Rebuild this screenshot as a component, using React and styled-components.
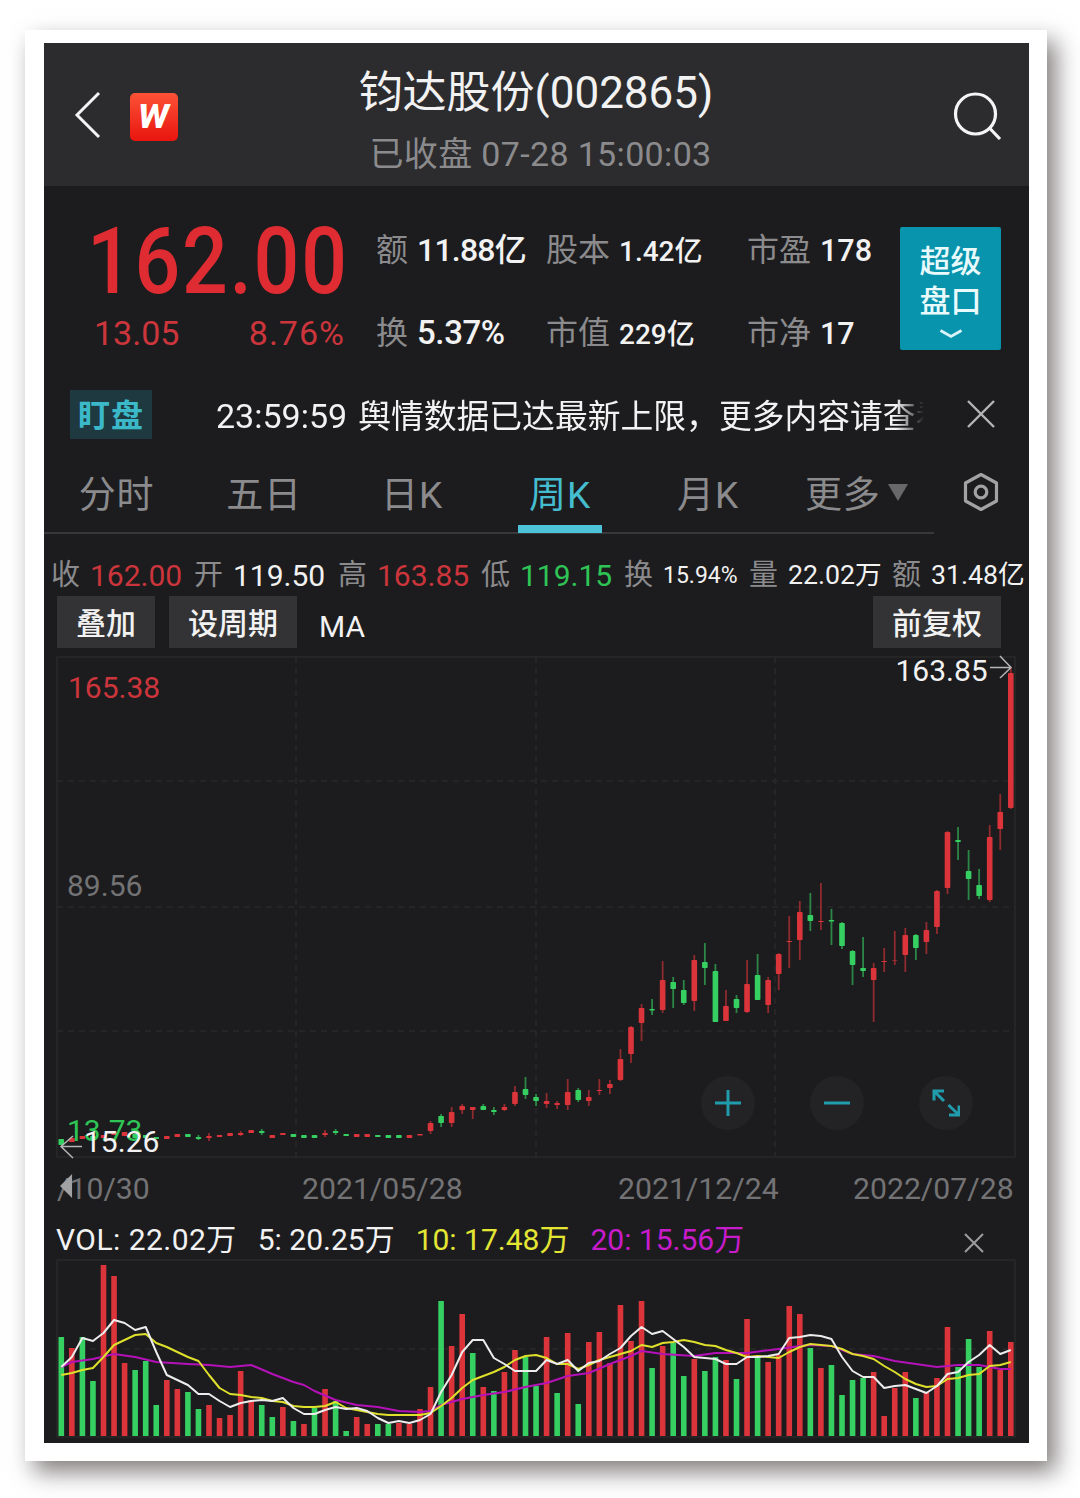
import React from "react";
import styled, { createGlobalStyle, css } from "styled-components";

const RED = "#dc343b";
const GREEN = "#36cf62";
const GREY = "#8b8b8d";

const FIRST_X = 61.3;
const STEP = 10.55;
const xAt = (i) => FIRST_X + i * STEP;

// [colour, body top, body bottom, high, low]
const candles = [
  ["g", 1139, 1145], ["r", 1138, 1142], ["r", 1136, 1139], ["g", 1136, 1139], ["r", 1135, 1138],
  ["r", 1132, 1135], ["r", 1132, 1136], ["g", 1134, 1138], ["g", 1135, 1138], ["g", 1137, 1139],
  ["r", 1136, 1139], ["r", 1134, 1137], ["g", 1134, 1137], ["g", 1137, 1139, 1135, 1140], ["r", 1136, 1138, 1133, 1141],
  ["r", 1135, 1137], ["r", 1133, 1136], ["r", 1133, 1135, 1131, 1136], ["r", 1130, 1133], ["g", 1131, 1133, 1129, 1135],
  ["r", 1135, 1138], ["r", 1133, 1135], ["g", 1134, 1137], ["g", 1135, 1138], ["g", 1135, 1138],
  ["r", 1133, 1135, 1130, 1137], ["g", 1131, 1133, 1129, 1135], ["g", 1134, 1136], ["r", 1134, 1137], ["r", 1134, 1137],
  ["g", 1135, 1137], ["g", 1135, 1138], ["g", 1135, 1138], ["r", 1135, 1138], ["r", 1134, 1135.5],
  ["r", 1123, 1131, 1121, 1134], ["g", 1116, 1123, 1114, 1127], ["r", 1112, 1123, 1107, 1127], ["r", 1106, 1110, 1104, 1114], ["r", 1107, 1110, 1107, 1119],
  ["g", 1106, 1110, 1104, 1110], ["g", 1110, 1112, 1107, 1115], ["r", 1107, 1110, 1104, 1111], ["r", 1092, 1104, 1086, 1106], ["g", 1089, 1095, 1077, 1099],
  ["g", 1097, 1101, 1094, 1106], ["r", 1101, 1104, 1093, 1108], ["r", 1103, 1105, 1101, 1109], ["r", 1092, 1105, 1079, 1110], ["g", 1090, 1100, 1088, 1102],
  ["r", 1097, 1101, 1090, 1106], ["r", 1090, 1091, 1079, 1095], ["r", 1084, 1088, 1080, 1094], ["r", 1059, 1080, 1049, 1081], ["r", 1027, 1054, 1026, 1063],
  ["r", 1008, 1023, 1004, 1041], ["g", 1009, 1010.5, 999, 1015], ["r", 980, 1010, 961, 1013], ["g", 982, 989, 977, 1008], ["g", 990, 1003, 980, 1005],
  ["r", 960, 1001, 955, 1011], ["g", 962, 968, 943, 985], ["g", 971, 1022, 964, 1022], ["r", 1006, 1021, 990, 1021], ["g", 999, 1008, 995, 1013],
  ["r", 984, 1012, 960, 1013], ["g", 975, 1000, 954, 1000], ["r", 980, 1005, 977, 1013], ["r", 954, 974, 953, 990], ["r", 941, 942, 916, 968],
  ["r", 912, 940, 901, 960], ["g", 915, 921, 893, 931], ["r", 921, 922, 883, 930], ["g", 920, 921.5, 909, 945], ["g", 923, 946, 922, 949],
  ["g", 951, 965, 950, 985], ["g", 968, 971, 937, 977], ["r", 968, 980, 963, 1022], ["r", 961, 962, 948, 972], ["r", 960, 960.5, 931, 965],
  ["r", 935, 955, 928, 972], ["g", 935, 948, 934, 960], ["r", 930, 942, 922, 954], ["r", 891, 927, 890, 934], ["r", 832, 888, 831, 894],
  ["g", 840, 842, 827, 860], ["g", 871, 879, 850, 900], ["g", 885, 896, 869, 899], ["r", 837, 900, 825, 902], ["r", 812, 829, 794, 850],
  ["r", 673, 808, 668, 809],
];

const volumes = [
  ["g", 1337], ["r", 1348], ["g", 1337], ["g", 1381], ["r", 1265], ["r", 1276], ["r", 1363], ["g", 1370], ["g", 1361], ["g", 1405],
  ["r", 1380], ["r", 1389], ["g", 1392], ["g", 1409], ["r", 1405], ["r", 1418], ["r", 1415], ["r", 1371], ["r", 1400], ["g", 1405],
  ["g", 1417], ["r", 1407], ["g", 1421], ["r", 1424], ["g", 1408], ["r", 1389], ["g", 1401], ["g", 1431], ["r", 1417], ["r", 1424],
  ["g", 1424], ["g", 1424], ["r", 1423], ["r", 1424], ["r", 1409], ["r", 1387], ["g", 1301], ["r", 1346], ["r", 1314], ["g", 1353],
  ["r", 1387], ["g", 1391], ["r", 1372], ["r", 1350], ["g", 1357], ["g", 1386], ["r", 1337], ["g", 1393], ["r", 1333], ["g", 1404],
  ["r", 1342], ["r", 1332], ["r", 1363], ["r", 1305], ["r", 1341], ["r", 1301], ["g", 1368], ["r", 1346], ["g", 1343], ["g", 1376],
  ["r", 1359], ["g", 1371], ["g", 1357], ["r", 1360], ["g", 1379], ["r", 1319], ["g", 1357], ["r", 1362], ["r", 1355], ["r", 1306],
  ["r", 1314], ["g", 1348], ["r", 1368], ["g", 1365], ["g", 1395], ["g", 1380], ["g", 1378], ["r", 1372], ["r", 1416], ["r", 1388],
  ["r", 1372], ["g", 1398], ["r", 1392], ["r", 1378], ["r", 1327], ["g", 1367], ["g", 1339], ["g", 1367], ["r", 1331], ["r", 1370],
  ["r", 1342],
];

const ma5 = [
  1367, 1357, 1338, 1341, 1333, 1320, 1323, 1330, 1327, 1352, 1375, 1380, 1385, 1394, 1394, 1401, 1407, 1403, 1401, 1400,
  1401, 1398, 1408, 1414, 1414, 1410, 1407, 1409, 1408, 1411, 1418, 1423, 1421, 1423, 1420, 1414, 1392, 1375, 1352, 1340,
  1340, 1358, 1364, 1371, 1371, 1371, 1360, 1364, 1360, 1371, 1363, 1361, 1354, 1348, 1336, 1327, 1334, 1331, 1339, 1347,
  1357, 1358, 1359, 1364, 1364, 1357, 1357, 1356, 1354, 1338, 1337, 1335, 1336, 1339, 1357, 1371, 1377, 1377, 1388, 1386,
  1385, 1389, 1393, 1386, 1374, 1372, 1362, 1355, 1345, 1354, 1350,
].map((y, i) => [i, y]);

const ma10 = [
  1375, 1373, 1370, 1368, 1357, 1345, 1340, 1335, 1334, 1343, 1347, 1352, 1357, 1361, 1375, 1388, 1394, 1395, 1397, 1398,
  1401, 1402, 1406, 1407, 1407, 1406, 1402, 1408, 1410, 1412, 1414, 1415, 1415, 1415, 1415, 1413, 1406, 1398, 1388, 1380,
  1376, 1372, 1367, 1360, 1356, 1355, 1358, 1364, 1364, 1369, 1365, 1360, 1357, 1354, 1351, 1345, 1347, 1343, 1342, 1340,
  1342, 1345, 1346, 1350, 1353, 1357, 1356, 1357, 1358, 1352, 1347, 1344, 1345, 1346, 1349, 1354, 1356, 1359, 1366, 1372,
  1379, 1384, 1387, 1386, 1379, 1378, 1375, 1374, 1366, 1365, 1362,
].map((y, i) => [i, y]);

const ma20 = [
  [0, 1367], [1, 1362], [3, 1359], [5, 1354], [7, 1357], [9, 1362], [12, 1364], [14, 1365], [16, 1367], [18, 1365],
  [20, 1374], [22, 1382], [23, 1385], [24, 1391], [26, 1400], [28, 1405], [30, 1407], [32, 1411], [34, 1412], [35, 1411],
  [36, 1405], [38, 1399], [40, 1395], [42, 1392], [44, 1387], [46, 1383], [48, 1376], [50, 1373], [52, 1364], [54, 1356],
  [55, 1351], [57, 1354], [60, 1356], [62, 1353], [65, 1353], [68, 1349], [70, 1346], [71, 1345], [73, 1346], [75, 1354],
  [77, 1356], [79, 1361], [81, 1364], [83, 1367], [85, 1365], [87, 1365], [89, 1369], [90, 1369],
];

const toPoints = (line) => line.map(([i, y]) => `${xAt(i)},${y}`).join(" ");
const colorOf = (c) => (c === "r" ? RED : GREEN);

const stats = [
  { label: "额", value: "11.88亿", size: 32, spacing: -0.8 },
  { label: "股本", value: "1.42亿", size: 28 },
  { label: "市盈", value: "178", size: 30.5 },
  { label: "换", value: "5.37%", size: 33, spacing: -0.4 },
  { label: "市值", value: "229亿", size: 28 },
  { label: "市净", value: "17", size: 30.5 },
];

const tabs = ["分时", "五日", "日K", "周K", "月K"];

const prices = [
  { label: "收", value: "162.00", color: "#cb353b" },
  { label: "开", value: "119.50" },
  { label: "高", value: "163.85", color: "#cb353b" },
  { label: "低", value: "119.15", color: "#2fc556" },
  { label: "换", value: "15.94%", size: 23 },
  { label: "量", value: "22.02万", size: 26.7 },
  { label: "额", value: "31.48亿", size: 26.7 },
];

const PriceChart = () => (
  <ChartSvg viewBox="44 652 985 510" width="985" height="510">
    <g fill="none" stroke="#28282a" strokeWidth="1.5">
      <rect x="57" y="657" width="958" height="500" />
      <g strokeDasharray="6 5">
        <path d="M296 657V1157M536 657V1157M775 657V1157" />
        <path d="M57 781H1015M57 907H1015M57 1031H1015" />
      </g>
    </g>
    {candles.map(([c, top, bottom, high, low], i) => (
      <g key={i} fill={colorOf(c)}>
        {high && <rect x={xAt(i) - 0.9} y={high} width="1.8" height={low - high} opacity="0.6" />}
        <rect x={xAt(i) - 2.8} y={top} width="5.6" height={bottom - top} rx="0.8" />
      </g>
    ))}
    <ChartText x="68" y="698" fill="#cb353b">165.38</ChartText>
    <ChartText x="67" y="896" fill="#737375">89.56</ChartText>
    <ChartText x="67" y="1141" fill="#2fc556">13.73</ChartText>
    <ChartText x="84" y="1152" fill="#f2f2f2">15.26</ChartText>
    <ChartText x="895.500" y="681" fill="#f2f2f2">163.85</ChartText>
    <g fill="none" stroke="#b5b5b5" strokeWidth="1.5">
      <path d="M990 667.500H1011M1000 656L1011 667.500L1000 678" />
      <path d="M82 1146.500H61M73 1136L61 1146.500L73 1158" />
    </g>
  </ChartSvg>
);

const VolumeChart = () => (
  <ChartSvg viewBox="44 1257 985 186" width="985" height="186">
    <rect x="57" y="1260" width="958" height="177" fill="none" stroke="#28282a" strokeWidth="1.5" />
    <path d="M57 1349H1015" stroke="#28282a" strokeWidth="1.5" strokeDasharray="6 5" />
    {volumes.map(([c, top], i) => (
      <rect key={i} x={xAt(i) - 2.8} y={top} width="5.6" height={1436 - top} fill={colorOf(c)} />
    ))}
    <g fill="none" strokeWidth="2" strokeLinejoin="round">
      <polyline points={toPoints(ma20)} stroke="#b511b8" />
      <polyline points={toPoints(ma10)} stroke="#dfe02c" />
      <polyline points={toPoints(ma5)} stroke="#ececec" />
    </g>
  </ChartSvg>
);

const App = () => (
  <Page>
    <GlobalStyle />
    <Frame>
      <Screen>
        <Header>
          <svg width="28" height="50" viewBox="0 0 28 50" fill="none" stroke="#f4f4f4" strokeWidth="3">
            <path d="M26 3L4 25L26 47" />
          </svg>
          <Logo>w</Logo>
          <TitleBlock>
            <Title>钧达股份(002865)</Title>
            <SubTitle>已收盘 07-28 15:00:03</SubTitle>
          </TitleBlock>
          <svg width="50" height="50" viewBox="0 0 50 50" fill="none" stroke="#f4f4f4" strokeWidth="3.200">
            <circle cx="23.500" cy="24" r="20" />
            <path d="M37 37.500L48 49" />
          </svg>
        </Header>

        <Quote>
          <PriceBlock>
            <BigPrice>162.00</BigPrice>
            <Changes>
              <span>13.05</span>
              <Percent>8.76%</Percent>
            </Changes>
          </PriceBlock>
          <Stats>
            {stats.map((s) => (
              <Stat key={s.label}>
                <StatLabel>{s.label}</StatLabel>
                <StatValue $size={s.size} $spacing={s.spacing}>{s.value}</StatValue>
              </Stat>
            ))}
          </Stats>
          <SuperButton>
            <span>超级</span>
            <span>盘口</span>
            <svg width="24" height="10" viewBox="0 0 24 10" fill="none" stroke="#d8f3f7" strokeWidth="2.800">
              <path d="M1.500 1.500L12 7.500L22.500 1.500" />
            </svg>
          </SuperButton>
        </Quote>

        <Notice>
          <NoticeTag>盯盘</NoticeTag>
          <NoticeText>
            <NoticeTime>23:59:59</NoticeTime>
            舆情数据已达最新上限，更多内容请查看
          </NoticeText>
          <svg width="28" height="30" viewBox="0 0 28 30" fill="none" stroke="#b4b4b6" strokeWidth="2.400">
            <path d="M1 2L27 28M27 2L1 28" />
          </svg>
        </Notice>

        <TabBar>
          <TabList>
            {tabs.map((t) => (
              <Tab key={t} $active={t === "周K"}>{t}</Tab>
            ))}
            <MoreTab>
              更多
              <svg width="20" height="17" viewBox="0 0 20 17">
                <path d="M0 0H20L10 17Z" fill="#68686a" />
              </svg>
            </MoreTab>
          </TabList>
          <svg width="36" height="40" viewBox="0 0 36 40" fill="none" stroke="#a2a2a4" strokeWidth="3.200">
            <path d="M18 2.500L33.500 11V29L18 37.500L2.500 29V11Z" strokeLinejoin="round" />
            <circle cx="18" cy="20" r="5.800" />
          </svg>
        </TabBar>

        <PriceRow>
          {prices.map((p, i) => (
            <PriceItem key={i}>
              <PriceLabel>{p.label}</PriceLabel>
              <PriceValue $color={p.color} $size={p.size}>{p.value}</PriceValue>
            </PriceItem>
          ))}
        </PriceRow>

        <Toolbar>
          <ToolButton $width={98}>叠加</ToolButton>
          <ToolButton $width={128}>设周期</ToolButton>
          <Indicator>MA</Indicator>
          <ToolButton $width={128}>前复权</ToolButton>
        </Toolbar>

        <ChartArea>
          <PriceChart />
          <ZoomControls>
            <ZoomButton>
              <svg width="28" height="28" viewBox="0 0 28 28">
                <path d="M14 1V27M1 14H27" />
              </svg>
            </ZoomButton>
            <ZoomButton>
              <svg width="28" height="28" viewBox="0 0 28 28">
                <path d="M1 14H27" />
              </svg>
            </ZoomButton>
            <ZoomButton>
              <svg width="28" height="28" viewBox="0 0 28 28">
                <path d="M2 11.500V2H12M2 2L12 12M27 16.500V26H17M27 26L16.500 16" />
              </svg>
            </ZoomButton>
          </ZoomControls>
        </ChartArea>

        <DateAxis>
          <FirstDate>
            /10/30
            <BackMark width="13" height="26" viewBox="0 0 14 26">
              <path d="M13 0V26L0 13Z" fill="#a2a2a4" />
            </BackMark>
          </FirstDate>
          <span>2021/05/28</span>
          <span>2021/12/24</span>
          <span>2022/07/28</span>
        </DateAxis>

        <VolumeHeader>
          <Legend $spacing={0.45}>VOL: 22.02万</Legend>
          <Legend>5: 20.25万</Legend>
          <Legend $color="#e4e634">10: 17.48万</Legend>
          <Legend $color="#c81bcb">20: 15.56万</Legend>
          <svg width="20" height="20" viewBox="0 0 20 20" fill="none" stroke="#9c9c9e" strokeWidth="2">
            <path d="M1 1L19 19M19 1L1 19" />
          </svg>
        </VolumeHeader>
        <VolumeChart />
      </Screen>
    </Frame>
  </Page>
);

export default App;

// Styled Components
const GlobalStyle = createGlobalStyle`
  * {
    box-sizing: border-box;
  }
  body {
    margin: 0;
    background: #ffffff;
    font-family: Roboto, "Noto Sans CJK SC", sans-serif;
  }
  svg {
    display: block;
    flex-shrink: 0;
  }
`;

const Page = styled.div`
  width: 1080px;
  height: 1498px;
  padding: 30px 0 0 25px;
  overflow: hidden;
`;

const Frame = styled.div`
  width: 1022px;
  height: 1431px;
  padding: 13px 18px 18px 19px;
  background: #ffffff;
  box-shadow: 9px 11px 22px rgba(30, 20, 20, 0.55);
`;

const Screen = styled.div`
  display: flex;
  flex-direction: column;
  width: 985px;
  height: 1400px;
  background: #1c1c1e;
  color: #f2f2f2;
  white-space: nowrap;
  overflow: hidden;
`;

const Header = styled.header`
  display: flex;
  align-items: center;
  height: 143px;
  padding: 0 27px 0 29px;
  background: #2c2c2e;
`;

const Logo = styled.div`
  display: flex;
  align-items: center;
  justify-content: center;
  width: 48px;
  height: 48px;
  margin: 4px 0 0 29px;
  padding-bottom: 8px;
  border-radius: 5px;
  background: linear-gradient(#fb5236, #e9150f);
  color: #ffffff;
  font-size: 44px;
  font-style: italic;
  font-weight: 700;
  line-height: 1;
`;

const TitleBlock = styled.div`
  flex: 1;
  padding: 18px 58px 0 0;
  text-align: center;
`;

const Title = styled.div`
  font-size: 44px;
  line-height: 60px;
`;

const SubTitle = styled.div`
  padding-left: 9px;
  color: ${GREY};
  font-size: 34px;
  letter-spacing: 0.35px;
  line-height: 62px;
`;

const Quote = styled.section`
  display: flex;
  height: 196px;
  padding: 41px 28px 0 46px;
`;

const PriceBlock = styled.div`
  width: 286px;
  color: #df2c33;
`;

const BigPrice = styled.div`
  height: 67px;
  margin-left: -3px;
  font-size: 92px;
  font-weight: 500;
  letter-spacing: 2px;
  line-height: 69px;
  transform: scaleX(0.875);
  transform-origin: left;
`;

const Changes = styled.div`
  display: flex;
  justify-content: space-between;
  padding: 18px 31px 0 4px;
  color: #cb353b;
  font-size: 34px;
  line-height: 42px;
`;

const Percent = styled.span`
  letter-spacing: 1px;
`;

const Stats = styled.div`
  display: grid;
  grid-template-columns: 170px 201px 153px;
  grid-template-rows: 46px 46px;
  row-gap: 37px;
`;

const Stat = styled.div`
  display: flex;
  align-items: baseline;
  line-height: 46px;
`;

const StatLabel = styled.span`
  margin-right: 9px;
  color: ${GREY};
  font-size: 32px;
`;

const StatValue = styled.span`
  font-size: ${(p) => p.$size}px;
  font-weight: 500;
  letter-spacing: ${(p) => p.$spacing || 0}px;
`;

const SuperButton = styled.button`
  display: flex;
  flex-direction: column;
  align-items: center;
  width: 101px;
  height: 123px;
  padding: 15px 0 0;
  border: none;
  border-radius: 2px;
  background: #0894ad;
  color: #e9fafc;
  font-family: inherit;
  font-size: 31px;
  font-weight: 500;
  line-height: 40px;

  svg {
    margin-top: 7px;
  }
`;

const Notice = styled.div`
  display: flex;
  align-items: center;
  height: 64px;
  padding: 0 34px 0 26px;
`;

const NoticeTag = styled.span`
  width: 82px;
  height: 49px;
  background: #1e393f;
  color: #3cb9c9;
  font-size: 32px;
  font-weight: 700;
  letter-spacing: 1px;
  line-height: 52px;
  text-align: center;
`;

const NoticeText = styled.div`
  width: 708px;
  margin: 5px 43px 0 64px;
  overflow: hidden;
  font-size: 32.8px;
  line-height: 48px;
  mask-image: linear-gradient(to right, #000 680px, transparent 708px);
`;

const NoticeTime = styled.span`
  margin-right: 11px;
  font-size: 34px;
`;

const TabBar = styled.nav`
  display: flex;
  height: 88px;
`;

const TabList = styled.div`
  display: flex;
  width: 890px;
  margin-right: 29px;
  border-bottom: 2px solid #38383a;

  & + svg {
    margin-top: 26px;
  }
`;

const Tab = styled.div`
  width: 148px;
  padding: 22px 0 0 2px;
  color: ${GREY};
  font-size: 37px;
  letter-spacing: 0.8px;
  line-height: 56px;
  text-align: center;

  &:first-child {
    width: 145px;
    padding-left: 0;
  }

  ${(p) =>
    p.$active &&
    css`
      color: #45bdd0;

      &::after {
        content: "";
        display: block;
        width: 84px;
        height: 8px;
        margin: 1px auto 0;
        background: #4cc3d8;
      }
    `}
`;

const MoreTab = styled(Tab)`
  display: flex;
  gap: 7px;
  padding-left: 24px;

  svg {
    margin-top: 16px;
  }
`;

const PriceRow = styled.div`
  display: grid;
  grid-template-columns: 143px 144px 143px 143px 125px 143px auto;
  align-items: center;
  height: 62px;
  padding: 21px 0 0 7px;
`;

const PriceItem = styled.div`
  display: flex;
  align-items: center;
  height: 41px;
  line-height: 41px;
`;

const PriceLabel = styled.span`
  width: 39px;
  color: ${GREY};
  font-size: 29px;
`;

const PriceValue = styled.span`
  color: ${(p) => p.$color || "#f2f2f2"};
  font-size: ${(p) => p.$size || 30}px;
`;

const Toolbar = styled.div`
  display: flex;
  align-items: center;
  gap: 14px;
  height: 52px;
  margin-bottom: 4px;
  padding: 0 28px 0 13px;
`;

const ToolButton = styled.button`
  width: ${(p) => p.$width}px;
  height: 52px;
  padding: 0 0 2px;
  border: none;
  background: #333335;
  color: #f2f2f2;
  font-family: inherit;
  font-size: 30px;
  font-weight: 500;
`;

const Indicator = styled.span`
  flex: 1;
  padding: 8px 0 0 8px;
  font-size: 30px;
`;

const ChartArea = styled.div`
  position: relative;
`;

const ChartSvg = styled.svg`
  overflow: visible;
`;

const ChartText = styled.text`
  font-size: 30px;
`;

const ZoomControls = styled.div`
  position: absolute;
  right: 56px;
  bottom: 32px;
  display: flex;
  gap: 55px;
`;

const ZoomButton = styled.div`
  display: flex;
  align-items: center;
  justify-content: center;
  width: 54px;
  height: 54px;
  border-radius: 50%;
  background: #232325;

  path {
    fill: none;
    stroke: #219cad;
    stroke-width: 3px;
  }
`;

const DateAxis = styled.div`
  display: grid;
  grid-template-columns: 245px 316px 235px auto;
  height: 54px;
  padding-left: 13px;
  color: #737375;
  font-size: 30.2px;
  line-height: 54px;
`;

const FirstDate = styled.span`
  position: relative;
`;

const BackMark = styled.svg`
  position: absolute;
  top: 11px;
  left: 3px;
`;

const VolumeHeader = styled.div`
  display: flex;
  align-items: center;
  height: 41px;
  padding: 7px 45px 0 12px;

  svg {
    margin: 5px 0 0 auto;
  }
`;

const Legend = styled.span`
  margin-right: 21px;
  color: ${(p) => p.$color || "#f2f2f2"};
  font-size: 30px;
  letter-spacing: ${(p) => p.$spacing || 0}px;
  line-height: 34px;
`;
